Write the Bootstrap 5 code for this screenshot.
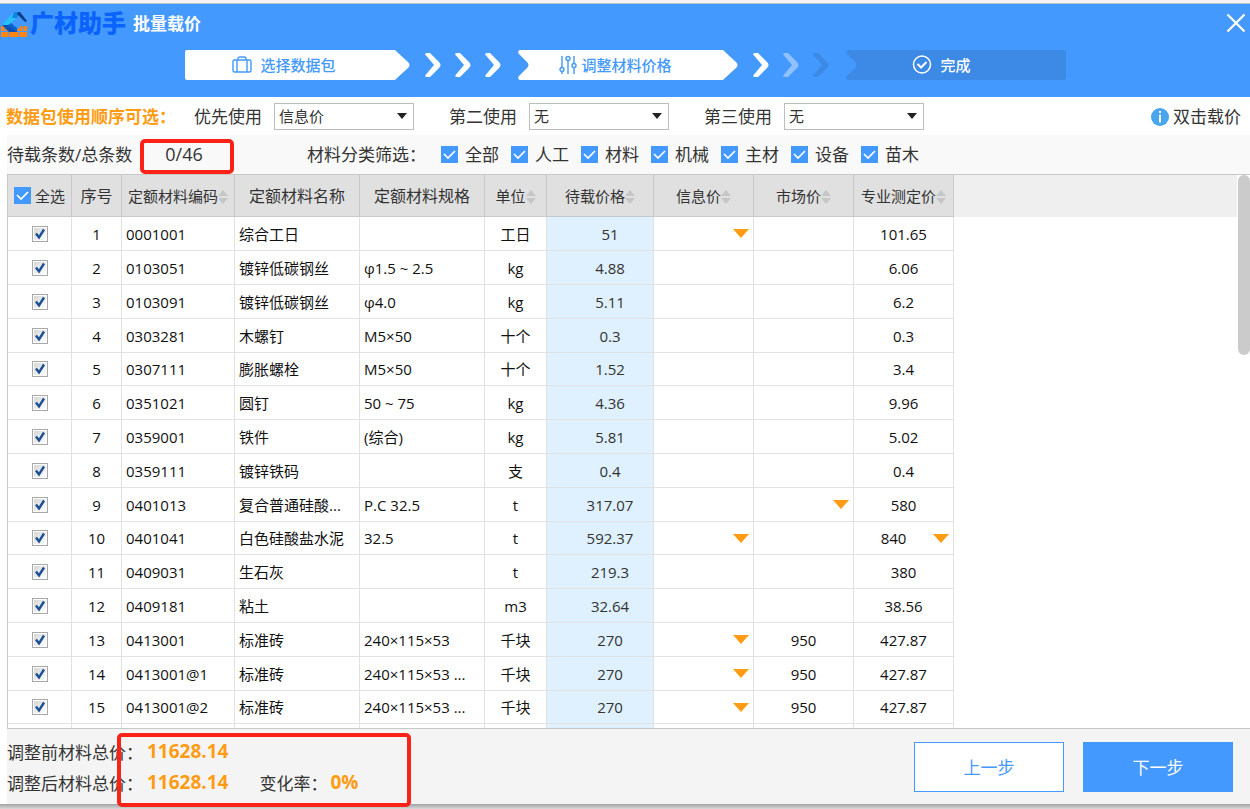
<!DOCTYPE html>
<html lang="zh-CN">
<head>
<meta charset="utf-8">
<meta name="viewport" content="width=device-width, initial-scale=1">
<title>广材助手 批量载价</title>
<link href="https://cdn.jsdelivr.net/npm/bootstrap@5.3.0/dist/css/bootstrap.min.css" rel="stylesheet">
<style>
  :root { --brand: #4499ff; --accent: #ff9c14; --mark-red: #fb2318; }
  body { font-family: "Open Sans", "Noto Sans", "Noto Sans CJK SC", sans-serif; font-size: 17px; line-height: 24px; color: #333; background: #fff; font-kerning: none; }
  .app-top { background: var(--brand); border-top: 1px solid #b9c3d0; height: 94px; flex: none; }
  .top-strip { height: 3px; background: #f6f4f2; flex: none; }
  .title-row { height: 46px; padding: 0 4px 8px 1px; }
  .brand-name { font-size: 24px; font-weight: 900; color: #0a62ff; margin-left: 2px; }
  .page-title { font-size: 17px; line-height: 24px; font-weight: 700; margin: 2px 0 0 7px; }
  .close-btn { width: 20px; height: 20px; line-height: 0; }
  .step { position: relative; height: 30px; width: 220px; padding-right: 24px; font-size: 15px; font-weight: 500; color: var(--brand); }
  .step > * { position: relative; }
  .step > svg.shape { position: absolute; inset: 0; width: 100%; height: 100%; }
  .step-first { width: 225px; padding-right: 26px; }
  .step-last { color: #fff; padding-right: 28px; }
  .arrows { width: 108px; padding: 0 17px 0 15px; }
  .order-row { height: 38px; padding: 0 9px 0 6px; flex: none; }
  .order-title, .order-label, .order-tip { padding-top: 2px; }
  .order-title { color: var(--accent); font-weight: 700; width: 188px; }
  .order-label { width: 80px; }
  .pick { width: 140px; height: 27px; border: 1px solid #bdbdbd; border-radius: 0; font-size: 15px; line-height: 20px; padding: 0 24px 0 4px; color: #333;
    background-size: 12px 8px; background-position: right 5px top 8px;
    background-image: url("data:image/svg+xml,%3csvg xmlns='http://www.w3.org/2000/svg' viewBox='0 0 12 8'%3e%3cpath fill='%23222' d='M1 1h10L6 7z'/%3e%3c/svg%3e"); }
  .pick-group + .pick-group { margin-left: 35px; }
  .filter-row { height: 39px; background: #f9f9f9; margin-left: 7px; flex: none; }
  .count-label { width: 133px; }
  .count-box { width: 94px; height: 35px; border: 4px solid var(--mark-red); border-radius: 5px; font-size: 18px; padding: 0 6px 4px 0; margin-top: 3px; }
  .filter-title { width: 134px; margin-left: 73px; }
  .filter-item { width: 70px; }
  .filter-item label { margin-left: 7px; }
  .tick { appearance: none; flex: none; width: 17px; height: 17px; margin: 0; background: var(--brand) center / 17px no-repeat; }
  .tick:checked { background-image: url("data:image/svg+xml,%3csvg xmlns='http://www.w3.org/2000/svg' viewBox='0 0 17 17'%3e%3cpath fill='none' stroke='%23fff' stroke-width='1.7' d='M3 8l4 4 7-7'/%3e%3c/svg%3e"); }
  .row-tick { appearance: none; display: block; width: 16px; height: 16px; margin: 0 auto; border: 1px solid #a9a9a9; background: linear-gradient(135deg, #dcdcdc, #fff) content-box; padding: 1px; }
  .row-tick:checked { background: url("data:image/svg+xml,%3csvg xmlns='http://www.w3.org/2000/svg' viewBox='0 0 14 14'%3e%3cpath fill='none' stroke='%231c4f93' stroke-width='2.4' d='M3 6.5L6 10.5 11 2.5'/%3e%3c/svg%3e") center / 14px no-repeat border-box, linear-gradient(135deg, #d6d6d6, #fff) content-box; }
  .grid-wrap { position: relative; flex: 1 1 0; min-height: 0; margin-left: 7px; border: 1px solid #c6c8c9; border-right: 0; overflow: hidden; }
  .head-fill { position: absolute; top: 0; left: 0; right: 13px; height: 42px; background: #efefef; }
  .price-grid { position: relative; table-layout: fixed; width: 946px; border-collapse: separate; border-spacing: 0; font-size: 15px; line-height: 20px; color: #111; }
  .price-grid th { height: 42px; padding: 0; background: #e0e0e0; border-right: 1px solid #c9c9c9; border-bottom: 1px solid #c9c9c9; font-weight: 400; color: #333; text-align: center; white-space: nowrap; }
  .price-grid th.wide-head { font-size: 16px; }
  .price-grid td { height: 34px; padding: 0; border-right: 1px solid #e2e2e2; border-bottom: 1px solid #e2e2e2; text-align: center; white-space: nowrap; overflow: hidden; }
  .price-grid tr:nth-child(5n) td { height: 33px; }
  .price-grid td.txt { text-align: left; padding-left: 4px; }
  .price-grid td.load { background: #dff0fe; padding-left: 20px; color: #333; }
  .sort { width: 10px; height: 16px; fill: #c6c6c6; }
  .more { width: 16px; height: 9px; fill: var(--accent); margin-right: 4px; flex: none; }
  .scroll-thumb { position: absolute; top: 0; right: 0; width: 12px; height: 180px; border-radius: 6px; background: #cbcbcb; }
  .app-foot { position: relative; background: #f4f4f4; height: 75px; margin-left: 7px; padding-right: 17px; flex: none; }
  .total-line { height: 31px; }
  .total-label { width: 140px; padding-top: 3px; }
  .amount { color: var(--accent); font-size: 19px; font-weight: 700; }
  .rate { margin-left: 31px; width: 71px; padding-top: 3px; }
  .mark-frame { position: absolute; left: 110px; top: 4px; width: 294px; height: 74px; border: 4px solid var(--mark-red); border-radius: 5px; pointer-events: none; z-index: 1; }
  .foot-actions { gap: 19px; }
  .foot-btn { width: 150px; height: 50px; border: 1px solid var(--brand); border-radius: 0; font-size: 17px; padding: 3px 0 0; }
  .foot-prev, .foot-prev:hover { background: #fff; color: var(--brand); }
  .foot-next, .foot-next:hover { background: var(--brand); color: #fff; }
  .bottom-shadow { height: 5px; flex: none; background: linear-gradient(#a2a2a2, #d9d9d9); }
</style>
</head>
<body class="d-flex flex-column vh-100 overflow-hidden">
<div class="top-strip"></div>
<header class="app-top">
  <div class="title-row d-flex align-items-center">
    <svg class="mt-1" width="27" height="26" viewBox="0 0 27 26" aria-hidden="true">
      <path fill="#ff8412" d="M0 14h6l8 6 6-6h6v11H0z"/>
      <path stroke="#4499ff" stroke-width="1" d="M0 19.500h26M8 20v5M18 20v5M4 14v5M22 14v5" fill="none"/>
      <path fill="#25c2f8" d="M1 13L13 0l4 4-9 9z"/>
      <path fill="#1182e8" d="M13 0h6l-3 6-5 0z"/>
      <path fill="#0850b4" d="M1 13h7l8 6v1h-8z"/>
      <path fill="#0a62d4" d="M10 11l6 5v4l-9-7z"/>
      <path fill="#063f86" d="M17 0h2l7 9-2 1-8-8z"/>
    </svg>
    <span class="brand-name">广材助手</span>
    <h1 class="page-title text-white">批量载价</h1>
    <button class="btn close-btn p-0 border-0 ms-auto" type="button" aria-label="关闭">
      <svg width="20" height="20" viewBox="0 0 20 20"><path d="M1.500 1.500l17 17M18.500 1.500l-17 17" stroke="#fff" stroke-width="2.200"/></svg>
    </button>
  </div>
  <div class="d-flex justify-content-center">
    <div class="step step-first d-flex align-items-center justify-content-center">
      <svg class="shape" viewBox="0 0 225 30" preserveAspectRatio="none"><path fill="#fff" d="M2 0H209Q211 0 212 2L223 12Q226 15 223 18L212 28Q211 30 209 30H2Q0 30 0 28V2Q0 0 2 0z"/></svg>
      <svg width="20" height="20" viewBox="0 0 20 20" fill="none" stroke="#4499ff" stroke-width="1.400"><rect x="1" y="5" width="18" height="12" rx="1.500"/><path d="M6 5V4q0-2 2-2h4q2 0 2 2v1M5 5v12M15 5v12"/></svg>
      <span class="ms-2">选择数据包</span>
    </div>
    <div class="arrows d-flex align-items-center justify-content-between">
      <svg width="16" height="24" viewBox="0 0 16 24"><path fill="#fff" d="M0 1.500Q0 0 2 0H5L14 9Q17 12 14 15L5 24H2Q-1 24 1 21.500L9 12 1 2.500z"/></svg>
      <svg width="16" height="24" viewBox="0 0 16 24"><path fill="#fff" d="M0 1.500Q0 0 2 0H5L14 9Q17 12 14 15L5 24H2Q-1 24 1 21.500L9 12 1 2.500z"/></svg>
      <svg width="16" height="24" viewBox="0 0 16 24"><path fill="#fff" d="M0 1.500Q0 0 2 0H5L14 9Q17 12 14 15L5 24H2Q-1 24 1 21.500L9 12 1 2.500z"/></svg>
    </div>
    <div class="step d-flex align-items-center justify-content-center">
      <svg class="shape" viewBox="0 0 220 30" preserveAspectRatio="none"><path fill="#fff" d="M2 0H204Q206 0 207 2L218 12Q221 15 218 18L207 28Q206 30 204 30H2Q-1 29 1 26L9 18Q12 15 9 12L1 4Q-1 1 2 0z"/></svg>
      <svg width="18" height="20" viewBox="0 0 18 20" fill="none" stroke="#4499ff" stroke-width="1.400"><path d="M3 1v11M3 16.500V19M9 5.500V19M15 1v7.500M15 13v6"/><circle cx="3" cy="14.500" r="2"/><circle cx="9" cy="3.500" r="2"/><circle cx="15" cy="10.500" r="2"/></svg>
      <span class="ms-1">调整材料价格</span>
    </div>
    <div class="arrows d-flex align-items-center justify-content-between">
      <svg width="16" height="24" viewBox="0 0 16 24"><path fill="#fff" d="M0 1.500Q0 0 2 0H5L14 9Q17 12 14 15L5 24H2Q-1 24 1 21.500L9 12 1 2.500z"/></svg>
      <svg width="16" height="24" viewBox="0 0 16 24"><path fill="#8fc1ff" d="M0 1.500Q0 0 2 0H5L14 9Q17 12 14 15L5 24H2Q-1 24 1 21.500L9 12 1 2.500z"/></svg>
      <svg width="16" height="24" viewBox="0 0 16 24"><path fill="#3c8ae6" d="M0 1.500Q0 0 2 0H5L14 9Q17 12 14 15L5 24H2Q-1 24 1 21.500L9 12 1 2.500z"/></svg>
    </div>
    <div class="step step-last d-flex align-items-center justify-content-center">
      <svg class="shape" viewBox="0 0 220 30" preserveAspectRatio="none"><path fill="#3c8ae6" d="M2 0H218Q220 0 220 2V28Q220 30 218 30H2Q-1 29 1 26L9 18Q12 15 9 12L1 4Q-1 1 2 0z"/></svg>
      <svg width="20" height="20" viewBox="0 0 20 20" fill="none" stroke="#fff" stroke-width="1.500"><circle cx="10" cy="9.500" r="8.500"/><path stroke-width="2" d="M5.500 9l3.500 3.500L14.500 7"/></svg>
      <span class="ms-2">完成</span>
    </div>
  </div>
</header>

<section class="order-row d-flex align-items-center">
  <span class="order-title">数据包使用顺序可选：</span>
  <div class="pick-group d-flex align-items-center">
    <label class="order-label" for="first">优先使用</label>
    <select class="form-select pick" id="first"><option>信息价</option><option>市场价</option></select>
  </div>
  <div class="pick-group d-flex align-items-center">
    <label class="order-label" for="second">第二使用</label>
    <select class="form-select pick" id="second"><option>无</option><option>市场价</option></select>
  </div>
  <div class="pick-group d-flex align-items-center">
    <label class="order-label" for="third">第三使用</label>
    <select class="form-select pick" id="third"><option>无</option><option>市场价</option></select>
  </div>
  <div class="order-tip ms-auto d-flex align-items-center gap-1">
    <svg width="18" height="18" viewBox="0 0 18 18"><circle cx="9" cy="9" r="9" fill="#4aa5ea"/><path stroke="#fff" stroke-width="1.800" d="M9 3v2M9 6.500V14.500"/></svg>
    <span>双击载价</span>
  </div>
</section>

<section class="filter-row d-flex align-items-center">
  <span class="count-label">待载条数/总条数</span>
  <span class="count-box d-flex align-items-center justify-content-center">0/46</span>
  <span class="filter-title">材料分类筛选：</span>
  <div class="d-flex" id="filters"></div>
</section>

<main class="grid-wrap">
  <div class="head-fill"></div>
  <table class="price-grid">
    <colgroup><col width="64"><col width="50"><col width="113"><col width="125"><col width="125"><col width="62"><col width="107"><col width="100"><col width="100"><col width="100"></colgroup>
    <thead><tr id="heads"></tr></thead>
    <tbody id="rows"></tbody>
  </table>
  <div class="scroll-thumb"></div>
</main>

<footer class="app-foot d-flex align-items-center">
  <div class="mark-frame"></div>
  <div>
    <div class="total-line d-flex align-items-center"><span class="total-label">调整前材料总价：</span><span class="amount">11628.14</span></div>
    <div class="total-line d-flex align-items-center"><span class="total-label">调整后材料总价：</span><span class="amount">11628.14</span><span class="rate">变化率：</span><span class="amount">0%</span></div>
  </div>
  <div class="foot-actions ms-auto d-flex">
    <button class="btn foot-btn foot-prev" type="button">上一步</button>
    <button class="btn foot-btn foot-next" type="button">下一步</button>
  </div>
</footer>
<div class="bottom-shadow"></div>

<script>
  const sort = '<svg class="sort" viewBox="0 0 10 16"><path d="M5 1l5 6H0zM5 15l5-6H0z"/></svg>';
  const more = '<svg class="more" viewBox="0 0 16 9"><path d="M0 0h16L8 9z"/></svg>';

  document.getElementById('filters').innerHTML = ['全部', '人工', '材料', '机械', '主材', '设备', '苗木'].map((t, i) =>
    `<div class="filter-item d-flex align-items-center"><input class="tick" type="checkbox" id="f${i}" checked><label for="f${i}">${t}</label></div>`).join('');

  document.getElementById('heads').innerHTML =
    '<th><div class="d-flex align-items-center justify-content-center"><input class="tick me-1" type="checkbox" id="all" checked><label for="all">全选</label></div></th>' +
    [['序号', 0], ['定额材料编码', 1], ['定额材料名称', 0], ['定额材料规格', 0], ['单位', 1], ['待载价格', 1], ['信息价', 1], ['市场价', 1], ['专业测定价', 1]]
      .map(([t, s]) => `<th class="${s ? '' : 'wide-head'}">${t}${s ? sort : ''}</th>`).join('');

  // code, name, spec, unit, loaded price, info price, market price, assessed price ("v" marks a price list)
  const data = [
    ['0001001', '综合工日', '', '工日', '51', 'v', '', '101.65'],
    ['0103051', '镀锌低碳钢丝', 'φ1.5 ~ 2.5', 'kg', '4.88', '', '', '6.06'],
    ['0103091', '镀锌低碳钢丝', 'φ4.0', 'kg', '5.11', '', '', '6.2'],
    ['0303281', '木螺钉', 'M5×50', '十个', '0.3', '', '', '0.3'],
    ['0307111', '膨胀螺栓', 'M5×50', '十个', '1.52', '', '', '3.4'],
    ['0351021', '圆钉', '50 ~ 75', 'kg', '4.36', '', '', '9.96'],
    ['0359001', '铁件', '(综合)', 'kg', '5.81', '', '', '5.02'],
    ['0359111', '镀锌铁码', '', '支', '0.4', '', '', '0.4'],
    ['0401013', '复合普通硅酸...', 'P.C 32.5', 't', '317.07', '', 'v', '580'],
    ['0401041', '白色硅酸盐水泥', '32.5', 't', '592.37', 'v', '', '840v'],
    ['0409031', '生石灰', '', 't', '219.3', '', '', '380'],
    ['0409181', '粘土', '', 'm3', '32.64', '', '', '38.56'],
    ['0413001', '标准砖', '240×115×53', '千块', '270', 'v', '950', '427.87'],
    ['0413001@1', '标准砖', '240×115×53 ...', '千块', '270', 'v', '950', '427.87'],
    ['0413001@2', '标准砖', '240×115×53 ...', '千块', '270', 'v', '950', '427.87']
  ];
  const price = p => p.endsWith('v')
    ? `<div class="d-flex align-items-center"><span class="flex-fill">${p.slice(0, -1)}</span>${more}</div>` : p;
  document.getElementById('rows').innerHTML = data.map((r, i) =>
    `<tr><td><input class="row-tick" type="checkbox" aria-label="选择第${i + 1}行" checked></td><td>${i + 1}</td>` +
    `<td class="txt">${r[0]}</td><td class="txt">${r[1]}</td><td class="txt">${r[2]}</td><td>${r[3]}</td><td class="load">${r[4]}</td>` +
    `<td>${price(r[5])}</td><td>${price(r[6])}</td><td>${price(r[7])}</td></tr>`).join('') +
    '<tr>' + '<td></td>'.repeat(6) + '<td class="load"></td>' + '<td></td>'.repeat(3) + '</tr>';
</script>
<script src="https://cdn.jsdelivr.net/npm/bootstrap@5.3.0/dist/js/bootstrap.bundle.min.js"></script>
</body>
</html>
